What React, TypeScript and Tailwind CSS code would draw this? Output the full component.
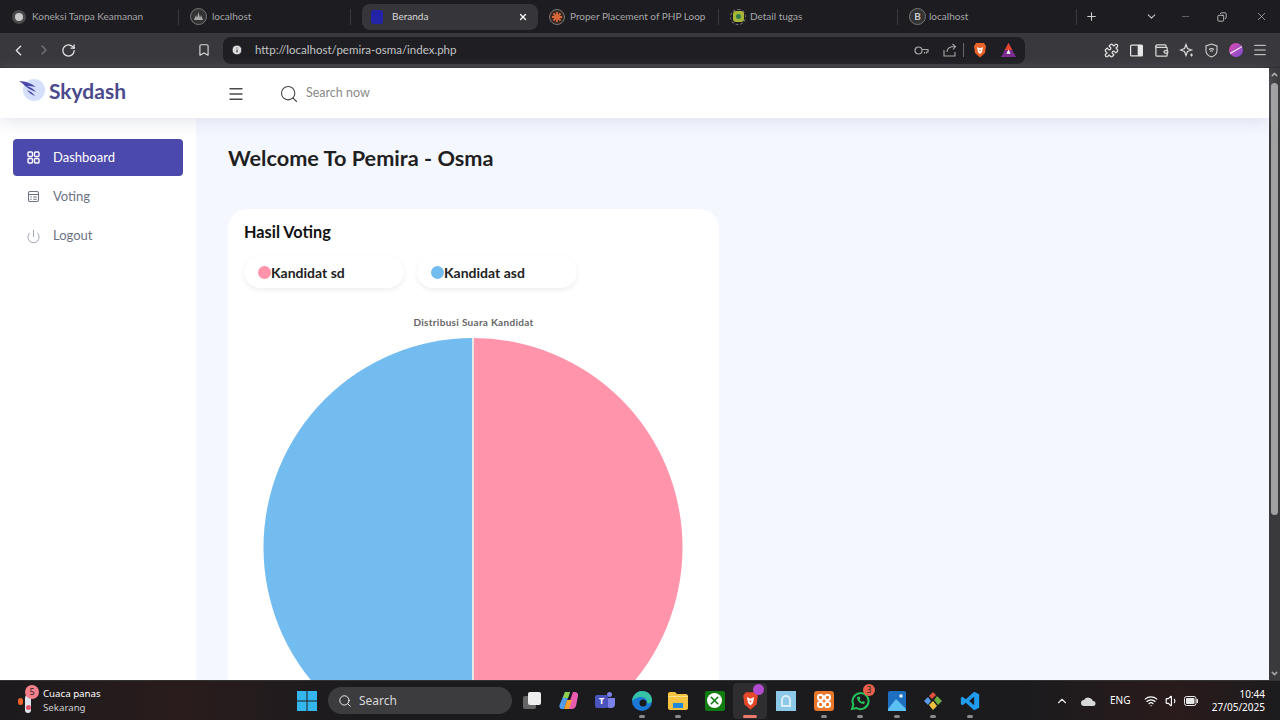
import { Bookmark, ChevronDown, ChevronLeft, ChevronRight, ChevronUp, Copy, Info, Menu, Minus, Plus, Power, Puzzle, RotateCw, Search, Volume1, Wallet, Wifi, X } from 'lucide-react';
import type { ReactNode } from 'react';

function FadedTab({ title, icon, w, gap = 'gap-[6px]' }: { title: string; icon: ReactNode; w: string; gap?: string }) {
  return (
    <div className={`${w} h-[28px] flex items-center ${gap} pl-[11px] pr-2 shrink-0 relative`}>
      {icon}
      <span className="text-[10px] text-[#a6a6a6] whitespace-nowrap">{title}</span>
      <span className="absolute right-0 top-[6px] h-[16px] w-px bg-[#3a3a3d]" />
    </div>
  );
}

function TaskItem({ w, dot = true, children }: { w: string; dot?: boolean; children: ReactNode }) {
  return (
    <div className={`${w} h-[40px] flex items-center justify-center relative shrink-0`}>
      {children}
      {dot && <span className="absolute bottom-[3px] left-1/2 -translate-x-1/2 w-[6px] h-[3px] rounded-full bg-[#8a8a8a]" />}
    </div>
  );
}

function BraveLion({ size, fill }: { size: number; fill: string }) {
  return (
    <svg width={size} height={size * 1.14} viewBox="0 0 14 16">
      <path d="M3 1h8l2 3-1 7-5 4.5L2 11 1 4z" fill={fill} />
      <path d="M4 5l3 1.5L10 5 9 10l-2 2-2-2z" fill="#fff" />
      <path d="M6 8h2l-1 1.5z" fill={fill} />
    </svg>
  );
}

export default function App() {
  return (
    <div className="w-[1280px] h-[720px] flex flex-col overflow-hidden bg-white font-['Lato',sans-serif]">
      {/* tab strip */}
      <div className="h-[33px] bg-[#1c1c21] flex items-center pl-[1px] shrink-0">
        <FadedTab title="Koneksi Tanpa Keamanan" w="w-[178px]" icon={<span className="w-[14px] h-[14px] rounded-full bg-[#c9c9c9] border-[3px] border-[#4a4a4a] shrink-0" />} />
        <FadedTab
          title="localhost"
          w="w-[172px]"
          gap="gap-[5px]"
          icon={
            <svg width="17" height="17" viewBox="0 0 17 17" className="shrink-0">
              <circle cx="8.5" cy="8.5" r="8" fill="#333" stroke="#777" />
              <path d="M4 12l2-5 1 3 1.500-6 1.500 6 1-3 2 5z" fill="#aaa" />
            </svg>
          }
        />
        <div className="w-[176px] h-[26px] bg-[#36363a] rounded-lg ml-[11px] flex items-center pl-[9px] pr-[10px] text-[#d8d8d8] shrink-0">
          <span className="w-[12px] h-[14px] bg-[#2323a8] rounded-[3px] shrink-0" />
          <span className="text-[10px] ml-[9px] flex-1">Beranda</span>
          <X size={10} strokeWidth={3} className="text-white" />
        </div>
        <FadedTab
          title="Proper Placement of PHP Loop"
          w="w-[181px]"
          gap="gap-[5px]"
          icon={
            <svg width="16" height="16" viewBox="0 0 16 16" className="shrink-0">
              <circle cx="8" cy="8" r="7.500" fill="#3a2a24" stroke="#777" />
              <path d="M8 3v10M3 8h10M4.500 4.500l7 7M11.500 4.500l-7 7" stroke="#d9673a" strokeWidth="1.800" />
            </svg>
          }
        />
        <FadedTab
          title="Detail tugas"
          w="w-[179px]"
          gap="gap-[4px]"
          icon={
            <span className="w-[16px] h-[16px] rounded-full border border-dashed border-[#777] flex items-center justify-center shrink-0">
              <span className="w-[11px] h-[11px] rounded-[3px] bg-[#a7b53a] flex items-center justify-center">
                <span className="w-[5px] h-[5px] rounded-full bg-[#2f7d4a]" />
              </span>
            </span>
          }
        />
        <FadedTab
          title="localhost"
          w="w-[179px]"
          gap="gap-[3px]"
          icon={<span className="w-[17px] h-[17px] rounded-full border border-[#777] bg-[#333] text-[#ccc] text-[10px] font-bold flex items-center justify-center shrink-0">B</span>}
        />
        <Plus size={13} className="text-[#d0d0d0] ml-[8px]" />
        <div className="flex-1" />
        <ChevronDown size={13} className="text-[#c8c8c8] mr-[22px]" />
        <Minus size={11} strokeWidth={1} className="text-[#b0b0b0] mr-[26px]" />
        <Copy size={10} className="text-[#d0d0d0] mr-[28px] -scale-x-100" />
        <X size={13} strokeWidth={1.2} className="text-[#d0d0d0] mr-[12px]" />
      </div>

      {/* toolbar */}
      <div className="h-[35px] bg-[#38383d] flex items-center pl-[10px] shrink-0 border-b border-[#2c2c30]">
        <ChevronLeft size={17} className="text-[#e0e0e0]" />
        <ChevronRight size={16} className="text-[#777] ml-[9px]" />
        <RotateCw size={15} className="text-[#e8e8e8] ml-[9px]" />
        <Bookmark size={14} className="text-[#d8d8d8] ml-[121px]" />
        <div className="w-[802px] h-[27px] ml-[12px] rounded-lg bg-[#1e1e23] flex items-center pl-[8px] pr-[7px] shrink-0">
          <Info size={12} className="text-[#1e1e23] fill-[#dcdcdc]" />
          <span className="ml-[12px] text-[11.500px] text-[#c4c4c4] flex-1">http://localhost/pemira-osma/index.php</span>
          <svg width="15" height="9" viewBox="0 0 15 9" fill="none" stroke="#a8a8a8" strokeWidth="1.200" className="mr-[14px]">
            <circle cx="4.500" cy="4.500" r="3.500" />
            <path d="M8 3.500h6v2.500h-1.500v1.500M10.500 6v1.500" />
          </svg>
          <svg width="14" height="14" viewBox="0 0 14 14" fill="none" stroke="#a8a8a8" strokeWidth="1.100">
            <path d="M1 7v6h11V9M4 9c0-4 3-5.500 8-5.500M9.500 1L12.500 3.500 10 6.500" />
          </svg>
          <span className="w-px h-[14px] bg-[#666] ml-[6px] mr-[9px]" />
          <span className="mr-[14px] flex">
            <BraveLion size={14} fill="#e8622a" />
          </span>
          <svg width="15" height="14" viewBox="0 0 14 13" className="mr-[2px]">
            <path d="M7 0l7 13H0z" fill="#7b2d8e" />
            <path d="M7 0l3.500 6.500h-7z" fill="#e8452c" />
            <path d="M7 6l2 4H5z" fill="#fff" />
          </svg>
        </div>
        <Puzzle size={15} className="text-[#e0e0e0] ml-[79px]" />
        <svg width="15" height="15" viewBox="0 0 15 15" className="ml-[10px]">
          <rect x="1" y="1.500" width="13" height="12" rx="1.500" fill="#e8e8e8" />
          <rect x="2.200" y="2.700" width="6.500" height="9.600" fill="#38383d" />
        </svg>
        <Wallet size={15} className="text-[#d8d8d8] ml-[10px]" />
        <svg width="15" height="15" viewBox="0 0 15 15" fill="none" stroke="#d8d8d8" strokeWidth="1.200" className="ml-[10px]">
          <path d="M7 1.500l1.500 4 4 1.500-4 1.500-1.500 4-1.500-4-4-1.500 4-1.500z" />
          <path d="M12.500 10.500v3M11 12h3" />
        </svg>
        <svg width="15" height="15" viewBox="0 0 15 15" fill="none" stroke="#d0d0d0" strokeWidth="1.100" className="ml-[10px]">
          <path d="M7.500 1l5.500 2v4.500c0 3-2.500 5.500-5.500 6.500C4.500 13 2 10.500 2 7.500V3z" />
          <path d="M5 6.500c1.500-1 3.500-1 5 0M6 8.200c1-.6 2-.6 3 0M7.500 10v.1" />
        </svg>
        <span className="w-[14px] h-[14px] rounded-full bg-gradient-to-br from-[#e040a8] to-[#7a4cd8] ml-[10px] relative overflow-hidden">
          <span className="absolute left-0 top-[6px] w-[16px] h-px bg-white -rotate-[30deg]" />
        </span>
        <Menu size={16} strokeWidth={1.500} className="text-[#d8d8d8] ml-[9px]" />
      </div>

      {/* page with scrollbar */}
      <div className="flex-1 min-h-0 flex">
        <div className="flex-1 min-w-0 flex flex-col">
          <header className="h-[50px] bg-white flex items-center shrink-0 relative z-10 shadow-[0_4px_16px_rgba(180,185,205,0.35)]">
            <div className="w-[228px] pl-[19px] flex items-center pb-[6px]">
              <svg width="28" height="24" viewBox="0 0 28 24" className="shrink-0">
                <circle cx="15" cy="12" r="11" fill="#d3dffb" />
                <path d="M0 3c7 0 13 3 17 6-4-1-7-1-9-1 3 1 7 3 9 6-5-2-9-4-12-7C4 6 2 4 0 3z" fill="#4b49ac" />
                <path d="M8 12c3 1 6 3 8 6-3-1-6-3-8-6z" fill="#4b49ac" />
              </svg>
              <span className="text-[21px] font-bold text-[#4b4a8c] ml-[2px] leading-none">Skydash</span>
            </div>
            <Menu size={18} strokeWidth={1.800} className="text-[#4a4a4a] -ml-[1px] mt-[1px]" />
            <Search size={20} strokeWidth={1.300} className="text-[#444] ml-[34px] mt-[1px]" />
            <span className="text-[12.500px] text-[#8a8a8a] ml-[7px]">Search now</span>
          </header>

          <div className="flex-1 min-h-0 flex">
            <aside className="w-[196px] bg-white px-[13px] pt-[21px] shrink-0">
              <div className="h-[37px] rounded-[4px] bg-[#4b49ac] flex items-center pl-[14px] text-white text-[13px]">
                <svg width="13" height="13" viewBox="0 0 13 13" fill="none" stroke="#fff" strokeWidth="1.400">
                  <rect x="1" y="1" width="4.500" height="4.500" rx="1" />
                  <rect x="7.500" y="1" width="4.500" height="4.500" rx="1" />
                  <rect x="1" y="7.500" width="4.500" height="4.500" rx="1" />
                  <rect x="7.500" y="7.500" width="4.500" height="4.500" rx="1" />
                </svg>
                <span className="ml-[13px]">Dashboard</span>
              </div>
              <div className="h-[39px] mt-px flex items-center pl-[14px] text-[#6c7383] text-[13px]">
                <svg width="13" height="13" viewBox="0 0 13 13" fill="none" stroke="#6c7383" strokeWidth="1.100">
                  <rect x="1.500" y="1.500" width="10" height="10" rx="1.500" />
                  <path d="M1.500 4.500h10M3.200 7h1.500M3.200 9.300h1.500M6.300 7h3.500M6.300 9.300h3.500" />
                </svg>
                <span className="ml-[13px]">Voting</span>
              </div>
              <div className="h-[39px] flex items-center pl-[13px] text-[#6c7383] text-[13px]">
                <Power size={15} strokeWidth={1} className="mt-[2px]" />
                <span className="ml-[12px]">Logout</span>
              </div>
            </aside>
            <main className="flex-1 min-w-0 bg-[#f5f7ff] pl-[32px] pt-[26px] overflow-hidden">
              <h1 className="text-[21.700px] font-bold text-[#1f1f1f] leading-[28px]">Welcome To Pemira - Osma</h1>
              <section className="w-[491px] h-[600px] bg-white rounded-[20px] mt-[37px] px-[16px] pt-[13px]">
                <h2 className="text-[16.300px] font-bold text-[#111] leading-[20px]">Hasil Voting</h2>
                <div className="flex gap-[13px] mt-[14px]">
                  <div className="w-[160px] h-[32px] rounded-full bg-white shadow-[0_2px_5px_rgba(0,0,0,0.07)] flex items-center pl-[14px] text-[14px] font-bold text-[#222]">
                    <span className="w-[13px] h-[13px] rounded-full bg-[#ff94ab]" />
                    Kandidat sd
                  </div>
                  <div className="w-[160px] h-[32px] rounded-full bg-white shadow-[0_2px_5px_rgba(0,0,0,0.07)] flex items-center pl-[14px] text-[14px] font-bold text-[#222]">
                    <span className="w-[13px] h-[13px] rounded-full bg-[#72bcf0]" />
                    Kandidat asd
                  </div>
                </div>
                <div className="text-center text-[10px] font-bold text-[#666] mt-[27px] leading-[14px] tracking-[0.3px]">Distribusi Suara Kandidat</div>
                <svg width="459" height="420" viewBox="0 0 459 420" className="mt-[9px]">
                  <path d="M229 0 A209.500 209.500 0 0 1 229 419 Z" fill="#ff94ab" />
                  <path d="M229 0 A209.500 209.500 0 0 0 229 419 Z" fill="#72bcf0" />
                  <line x1="229" y1="0" x2="229" y2="419" stroke="#e8e8e8" strokeWidth="2" />
                </svg>
              </section>
            </main>
          </div>
        </div>
        <div className="w-[11px] bg-[#3a3a3d] flex flex-col items-center shrink-0">
          <ChevronUp size={9} strokeWidth={4} className="text-[#a8a8a8] mt-[2px]" />
          <div className="w-[7px] h-[432px] rounded-full bg-[#a0a0a0] mt-[4px]" />
          <div className="flex-1" />
          <ChevronDown size={9} strokeWidth={4} className="text-[#a8a8a8] mb-[2px]" />
        </div>
      </div>

      {/* windows taskbar */}
      <div className="h-[40px] shrink-0 bg-[linear-gradient(90deg,#1c1a1d,#2a1c1c_14%,#1b1b1e_28%,#1b1b1d_80%,#2a1b1c_92%,#1c1b1d)] border-t border-[#333] flex items-center text-white font-['Noto_Sans',sans-serif]">
        <div className="relative w-[43px] h-[39px] shrink-0">
          <span className="absolute left-[18px] top-[17px] w-[5px] h-[7px] rounded-full bg-[#e8632a]" />
          <span className="absolute left-[25px] top-[14px] w-[6px] h-[18px] rounded-full bg-[#dfe3ee]" />
          <span className="absolute left-[26px] top-[24px] w-[5px] h-[5px] rounded-full bg-[#e8546a]" />
          <span className="absolute left-[25px] top-[4px] w-[14px] h-[14px] rounded-full bg-[#f5808c] text-[9px] flex items-center justify-center text-[#222]">5</span>
        </div>
        <div className="w-[240px] leading-[14px] text-[9.700px] shrink-0">
          <div>Cuaca panas</div>
          <div className="text-[#cfcfcf]">Sekarang</div>
        </div>
        <svg width="20" height="20" viewBox="0 0 20 20" className="ml-[14px] shrink-0">
          <path d="M0 0h9.500v9.500H0zM10.500 0H20v9.500h-9.500zM0 10.500h9.500V20H0zM10.500 10.500H20V20h-9.500z" fill="#35b5ee" />
        </svg>
        <div className="w-[184px] h-[27px] ml-[11px] rounded-full bg-[#3c3c3e] flex items-center pl-[10px] text-[12px] text-[#d8d8d8] shrink-0">
          <Search size={14} strokeWidth={1.500} className="text-white" />
          <span className="ml-[7px]">Search</span>
        </div>
        <div className="flex items-center ml-[2px]">
          <TaskItem w="w-[36px]" dot={false}>
            <span className="relative w-[18px] h-[17px]">
              <span className="absolute left-0 top-[4px] w-[13px] h-[13px] rounded-[2px] bg-[#666]" />
              <span className="absolute left-[5px] top-0 w-[13px] h-[13px] rounded-[2px] bg-[#eee]" />
            </span>
          </TaskItem>
          <TaskItem w="w-[37px]" dot={false}>
            <svg width="19" height="19" viewBox="0 0 19 19">
              <path d="M6 1h5L5 18H3c-2 0-3-2-2.500-4z" fill="#4f9cf0" />
              <path d="M8 18h5c2 0 3-1 4-3l2-10c.4-2-1-4-3-4h-2z" fill="#e85cb0" />
              <path d="M5 18h5l3-9H8z" fill="#f5a030" />
              <path d="M6 1h5l-2 6H4z" fill="#8bd04a" />
            </svg>
          </TaskItem>
          <TaskItem w="w-[36px]" dot={false}>
            <span className="relative w-[20px] h-[18px]">
              <span className="absolute left-[12px] top-[0px] w-[5px] h-[5px] rounded-full bg-[#7b83eb]" />
              <span className="absolute left-[11px] top-[6px] w-[9px] h-[10px] rounded-b-[4px] bg-[#7b83eb]" />
              <span className="absolute left-0 top-[3px] w-[13px] h-[13px] rounded-[2px] bg-[#4b53bc] text-[9px] font-bold flex items-center justify-center">T</span>
            </span>
          </TaskItem>
          <TaskItem w="w-[37px]">
            <svg width="20" height="20" viewBox="0 0 20 20">
              <circle cx="10" cy="10" r="10" fill="#1a78d6" />
              <path d="M0 10C1 3 6 0 10 0c6 0 10 4 10 9 0 3-3 4-5 3 1-3-2-6-6-6-4 0-7 2-9 4z" fill="#36c2a4" />
              <circle cx="11" cy="12" r="3.500" fill="#1a1a1d" />
            </svg>
          </TaskItem>
          <TaskItem w="w-[36px]">
            <svg width="20" height="18" viewBox="0 0 20 18">
              <path d="M0 2c0-1 .5-2 2-2h5l2 2h9c1 0 2 1 2 2v12c0 1-1 2-2 2H2c-1 0-2-1-2-2z" fill="#f5c242" />
              <path d="M5 11h10v5H5z" fill="#2088d8" />
              <path d="M0 4h20v1H0z" fill="#fbe08a" />
            </svg>
          </TaskItem>
          <TaskItem w="w-[37px]" dot={false}>
            <span className="w-[20px] h-[20px] rounded-[2px] bg-[#107c10] flex items-center justify-center">
              <span className="w-[15px] h-[15px] rounded-full bg-white flex items-center justify-center">
                <X size={13} strokeWidth={3} className="text-[#107c10]" />
              </span>
            </span>
          </TaskItem>
          <div className="w-[34px] h-[36px] rounded-[4px] bg-[#2e2e30] flex items-center justify-center relative shrink-0">
            <BraveLion size={17} fill="#e8482a" />
            <span className="absolute right-[3px] top-[1px] w-[11px] h-[11px] rounded-full bg-[#b04cd0]" />
            <span className="absolute bottom-[1px] left-1/2 -translate-x-1/2 w-[14px] h-[3px] rounded-full bg-[#e87a6a]" />
          </div>
          <TaskItem w="w-[38px]" dot={false}>
            <span className="w-[20px] h-[20px] bg-[#8cc8e8] flex items-center justify-center">
              <span className="w-[10px] h-[12px] rounded-t-full border-[2px] border-[#d8eef8]" />
            </span>
          </TaskItem>
          <TaskItem w="w-[37px]">
            <span className="w-[20px] h-[20px] rounded-[3px] bg-[#e9782a] flex items-center justify-center">
              <svg width="14" height="14" viewBox="0 0 14 14" fill="none" stroke="#fff" strokeWidth="2">
                <rect x="1" y="1" width="5" height="5" rx="2" />
                <rect x="8" y="1" width="5" height="5" rx="2" />
                <rect x="1" y="8" width="5" height="5" rx="2" />
                <rect x="8" y="8" width="5" height="5" rx="2" />
              </svg>
            </span>
          </TaskItem>
          <TaskItem w="w-[36px]">
            <svg width="20" height="20" viewBox="0 0 20 20" fill="none">
              <path d="M2 18l1.300-4.500A8 8 0 1 1 6.500 17z" stroke="#25c15c" strokeWidth="2" />
              <path d="M7 6c0 4 3 7 7 7l1-2-2-1-1 1c-1-.5-2-1.500-2.500-2.500l1-1-1-2z" fill="#25c15c" />
            </svg>
            <span className="absolute right-[3px] top-[3px] w-[12px] h-[12px] rounded-full bg-[#e8604c] text-[8px] text-[#222] flex items-center justify-center">3</span>
          </TaskItem>
          <TaskItem w="w-[37px]">
            <svg width="18" height="20" viewBox="0 0 18 20">
              <rect width="18" height="20" rx="2" fill="#1f6fc0" />
              <path d="M0 18l8-10 10 10v2H0z" fill="#5cc0f5" />
              <circle cx="13" cy="5" r="1.800" fill="#dff3ff" />
            </svg>
          </TaskItem>
          <TaskItem w="w-[36px]">
            <svg width="20" height="20" viewBox="0 0 20 20">
              <path d="M6 5l4-4 3 3-4 4z" fill="#e0503c" />
              <path d="M11 9l3-4 5 5-4 4z" fill="#6cae44" />
              <path d="M6 14l4-4 4 5-4 4z" fill="#f0c040" />
              <path d="M1 10l4-4 3 4-3 4z" fill="#5a9ae8" />
            </svg>
          </TaskItem>
          <TaskItem w="w-[37px]">
            <svg width="20" height="20" viewBox="0 0 24 24">
              <path d="M17 1l6 3v16l-6 3L7 14l-4 3-2-1V8l2-1 4 3zM17 7l-6 5 6 5z" fill="#1f9cf0" fillRule="evenodd" />
            </svg>
          </TaskItem>
        </div>
        <ChevronUp size={14} className="text-[#e8e8e8] ml-[67px]" />
        <svg width="15" height="10" viewBox="0 0 15 10" className="ml-[12px]">
          <path d="M3 10a3 3 0 0 1 0-6 5 5 0 0 1 9 1 2.500 2.500 0 0 1 0 5z" fill="#d8d8d8" />
        </svg>
        <span className="text-[10px] ml-[14px]">ENG</span>
        <Wifi size={14} className="ml-[14px]" />
        <Volume1 size={14} className="ml-[7px]" />
        <svg width="14" height="10" viewBox="0 0 14 10" fill="none" className="ml-[5px]">
          <rect x="0.500" y="0.500" width="11.500" height="9" rx="2" stroke="#e8e8e8" />
          <rect x="2" y="2" width="8.500" height="6" rx="1" fill="#e8e8e8" />
          <rect x="12.500" y="3" width="1.500" height="4" rx="0.500" fill="#e8e8e8" />
        </svg>
        <div className="flex-1 text-[10px] leading-[13px] text-right pr-[15px]">
          <div>10:44</div>
          <div>27/05/2025</div>
        </div>
      </div>
    </div>
  );
}
